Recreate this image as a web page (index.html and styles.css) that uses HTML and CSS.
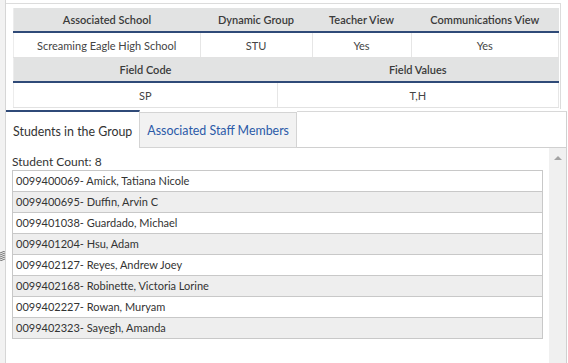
FILE: index.html
```html
<!DOCTYPE html>
<html lang="en">
<head>
  <meta charset="UTF-8">
  <title>Dynamic Group Details</title>
  <link rel="stylesheet" href="styles.css">
</head>
<body>
  <div class="layout">
    <div class="splitter">
      <svg class="grip" viewBox="0 0 6 10" width="6" height="10">
        <path d="M0,2 L5,0 M0,4 L5,2 M0,6 L5,4 M0,8 L5,6 M0,10 L5,8" stroke="#777" stroke-width="1" fill="none"/>
      </svg>
    </div>
    <div class="main">
      <div class="details">
        <table class="grid">
          <tr>
            <th class="c1">Associated School</th>
            <th class="c2">Dynamic Group</th>
            <th class="c3">Teacher View</th>
            <th class="c4">Communications View</th>
          </tr>
          <tr>
            <td>Screaming Eagle High School</td>
            <td>STU</td>
            <td>Yes</td>
            <td>Yes</td>
          </tr>
        </table>
        <table class="grid">
          <tr>
            <th class="f1">Field Code</th>
            <th>Field Values</th>
          </tr>
          <tr>
            <td>SP</td>
            <td>T,H</td>
          </tr>
        </table>
      </div>

      <div class="tabs">
        <div class="tab active">Students in the Group</div>
        <div class="tab">Associated Staff Members</div>
        <div class="tab-rest"></div>
      </div>

      <div class="panel">
        <div class="panel-body">
          <div class="count">Student Count: 8</div>
          <ul class="students">
            <li>0099400069- Amick, Tatiana Nicole</li>
            <li>0099400695- Duffin, Arvin C</li>
            <li>0099401038- Guardado, Michael</li>
            <li>0099401204- Hsu, Adam</li>
            <li>0099402127- Reyes, Andrew Joey</li>
            <li>0099402168- Robinette, Victoria Lorine</li>
            <li>0099402227- Rowan, Muryam</li>
            <li>0099402323- Sayegh, Amanda</li>
          </ul>
        </div>
        <div class="scrollbar">
          <span class="arrow"></span>
        </div>
      </div>
    </div>
  </div>
</body>
</html>
```

FILE: styles.css
```css
html, body {
  margin: 0;
  height: 100%;
  overflow: hidden;
}
body {
  font-family: Lato, "Open Sans", Arial, sans-serif;
  color: #333;
  background: #fff;
}
.layout {
  display: flex;
  height: 363px;
}
.splitter {
  width: 6px;
  background: #f2f2f2;
  border-right: 1px solid #d6d6d6;
  display: flex;
  flex-direction: column;
  align-items: center;
  padding-top: 251px;
  box-sizing: border-box;
}
.grip {
  display: block;
}
.main {
  flex: 1;
  display: flex;
  flex-direction: column;
  padding-right: 1px;
}
.details {
  margin-top: 3px;
  margin-right: 6px;
  border-top: 1px solid #dcdcdc;
  border-right: 1px solid #dcdcdc;
  padding: 4px 1px 1px 7px;
}
.grid {
  width: 100%;
  border-collapse: collapse;
  font-size: 11px;
  text-align: center;
  border-left: 1px solid #ececec;
}
.grid th {
  background: #e2e3e3;
  font-weight: 600;
  color: #3a3a3a;
  height: 23px;
  padding: 0;
  border-bottom: 2px solid #2f4a78;
}
.grid td {
  height: 24px;
  padding: 0;
  border-right: 1px solid #e6e6e6;
  border-bottom: 1px solid #e2e2e2;
  color: #444;
}
.c1 { width: 186px; }
.c2 { width: 112px; }
.c3 { width: 99px; }
.f1 { width: 263px; }

.tabs {
  display: flex;
  margin-top: 1px;
  height: 38px;
  white-space: nowrap;
}
.tab {
  font-size: 12.4px;
  padding: 0 7px;
  display: flex;
  align-items: center;
  box-sizing: border-box;
  background: #f2f2f2;
  color: #2b5aa8;
  border-top: 1px solid #d4d4d4;
  border-right: 1px solid #d4d4d4;
  border-bottom: 1px solid #d4d4d4;
  margin-top: 2px;
}
.tab.active {
  background: #fff;
  color: #333;
  border-top: 2px solid #2f4a78;
  border-right: 1px solid #d4d4d4;
  border-bottom: none;
  margin-top: 0;
  padding-top: 2px;
}
.tab-rest {
  flex: 1;
  margin-top: 1px;
  border-top: 1px solid #d8d8d8;
  border-right: 1px solid #d0d0d0;
  border-bottom: 1px solid #d0d0d0;
}
.panel {
  flex: 1;
  display: flex;
  border-right: 1px solid #d0d0d0;
}
.panel-body {
  flex: 1;
  padding: 6px 6px 0 6px;
}
.count {
  font-size: 12px;
  line-height: 16px;
  color: #333;
}
.students {
  list-style: none;
  margin: 0;
  padding: 0;
  border: 1px solid #c8c8c8;
  border-bottom: none;
}
.students li {
  height: 20px;
  line-height: 20px;
  font-size: 11px;
  padding-left: 3px;
  border-bottom: 1px solid #c8c8c8;
  color: #333;
}
.students li:nth-child(even) {
  background: #eeeeee;
}
.scrollbar {
  width: 17px;
  background: #f0f0f0;
  display: flex;
  justify-content: center;
  padding-top: 8px;
  box-sizing: border-box;
}
.arrow {
  width: 0;
  height: 0;
  border-left: 4px solid transparent;
  border-right: 4px solid transparent;
  border-bottom: 4px solid #a3a3a3;
}
```
